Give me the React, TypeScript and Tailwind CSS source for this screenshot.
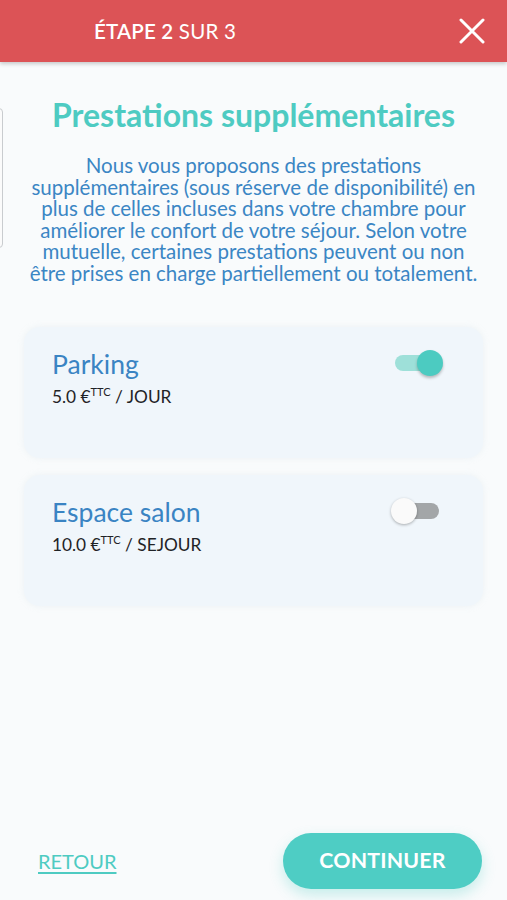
import { useState } from "react";

interface IPrestation {
  name: string;
  price: string;
  unit: string;
  enabled: boolean;
}

const Toggle = ({ on, onClick }: { on: boolean; onClick: () => void }) => {
  return (
    <button onClick={onClick} className="relative w-[50px] h-[26px] flex items-center shrink-0">
      <span
        className={
          on
            ? "absolute left-[2px] right-[2px] h-[16px] rounded-full bg-[#9ee0d9]"
            : "absolute left-[2px] right-[4px] h-[16px] rounded-full bg-[#a3a6a8]"
        }
      ></span>
      <span
        className={
          on
            ? "absolute right-0 w-[26px] h-[26px] rounded-full bg-[#4ccbc1] shadow-[0_2px_3px_rgba(0,0,0,0.25)]"
            : "absolute -left-[2px] w-[26px] h-[26px] rounded-full bg-[#fafafa] shadow-[0_1px_3px_rgba(0,0,0,0.3)]"
        }
      ></span>
    </button>
  );
};

const PrestationCard = ({
  item,
  onToggle,
}: {
  item: IPrestation;
  onToggle: () => void;
}) => {
  return (
    <div className="mx-6 h-[131px] rounded-2xl bg-[#f0f6fb] shadow-[0_0_6px_rgba(200,215,225,0.25)] pl-7 pr-10 pt-[19px] flex justify-between items-start">
      <div className="flex flex-col">
        <h2 className="text-[26.5px] leading-[36px] text-[#3a84c3]">{item.name}</h2>
        <p className="mt-[2px] text-[17.3px] text-[#1f2326]">
          {item.price} €<sup className="text-[11px] -top-[7px]">TTC</sup> / {item.unit}
        </p>
      </div>
      <div className="mt-[4px]">
        <Toggle on={item.enabled} onClick={onToggle} />
      </div>
    </div>
  );
};

export default function App() {
  const [items, setItems] = useState<IPrestation[]>([
    { name: "Parking", price: "5.0", unit: "JOUR", enabled: true },
    { name: "Espace salon", price: "10.0", unit: "SEJOUR", enabled: false },
  ]);

  const toggle = (i: number) =>
    setItems(items.map((it, idx) => (idx === i ? { ...it, enabled: !it.enabled } : it)));

  return (
    <div
      className="relative w-[507px] h-[900px] overflow-hidden bg-[#f9fbfc] flex flex-col"
      style={{ fontFamily: "Lato, 'Open Sans', sans-serif" }}
    >
      <header className="h-[62px] bg-[#dc5356] shadow-[0_2px_4px_rgba(0,0,0,0.2)] flex items-center justify-between pl-[94px] pr-[22px] shrink-0 z-10">
        <span className="text-white text-[20.5px] tracking-[0.2px]">
          <span className="font-semibold">ÉTAPE 2</span> SUR 3
        </span>
        <button className="text-white">
          <svg width="26" height="26" viewBox="0 0 26 26" fill="none" stroke="currentColor" strokeWidth="3" strokeLinecap="round">
            <path d="M2 2 L24 24 M24 2 L2 24" />
          </svg>
        </button>
      </header>

      <div className="absolute left-[-8px] top-[108px] w-[11px] h-[140px] rounded-r-[4px] border border-[#c9cccf] bg-[#fbfbfb]"></div>

      <main className="flex flex-col flex-1">
        <h1 className="mt-[33px] text-center text-[32px] font-bold text-[#4ecbc2] leading-[40px]">
          Prestations supplémentaires
        </h1>
        <p className="mt-[20px] px-[28px] text-center text-[20.5px] leading-[21.5px] text-[#3b86c4]">
          Nous vous proposons des prestations supplémentaires (sous réserve de disponibilité) en plus de celles
          incluses dans votre chambre pour améliorer le confort de votre séjour. Selon votre mutuelle, certaines
          prestations peuvent ou non être prises en charge partiellement ou totalement.
        </p>

        <div className="mt-[43px] flex flex-col gap-[17px]">
          {items.map((item, i) => (
            <PrestationCard key={item.name} item={item} onToggle={() => toggle(i)} />
          ))}
        </div>

        <div className="mt-auto mb-[11px] flex items-center justify-between pl-[38px] pr-[25px]">
          <a className="text-[20px] text-[#4ecbc2] underline underline-offset-[3px] decoration-[1.5px]">
            RETOUR
          </a>
          <button className="w-[199px] h-[56px] rounded-full bg-[#4ecdc4] text-white text-[21.3px] font-bold tracking-[0.2px] shadow-[0_6px_14px_rgba(78,205,196,0.3)]">
            CONTINUER
          </button>
        </div>
      </main>
    </div>
  );
}
